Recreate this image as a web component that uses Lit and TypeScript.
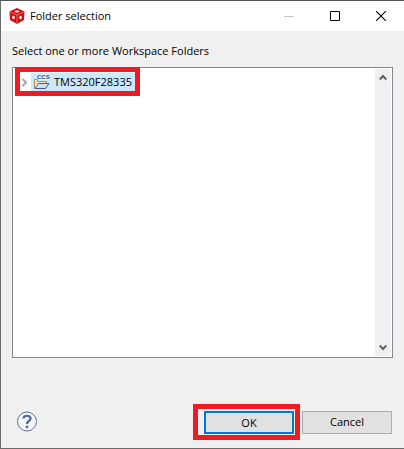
import { LitElement, html, css } from "lit";
import { customElement, state } from "lit/decorators.js";

@customElement("tree-row")
class TreeRow extends LitElement {
  static properties = { label: {} };
  declare label: string;

  static styles = css`
    :host {
      display: block;
    }
    .row {
      display: flex;
      align-items: center;
      height: 19px;
    }
    .twisty {
      display: flex;
      padding: 0;
      border: 0;
      width: 11px;
      background: none;
    }
    .item {
      display: flex;
      align-items: center;
      gap: 4px;
      flex: 1;
      height: 18px;
      padding: 0 3px 0 2px;
      border: 0;
      background: #cce8ff;
      color: #000;
      font: 11px/18px "Open Sans", "Noto Sans", sans-serif;
    }
    svg {
      display: block;
    }
    .badge {
      font: bold 6px "Liberation Sans", sans-serif;
      fill: #1f4f86;
    }
  `;

  render() {
    return html`
      <div class="row" role="treeitem" aria-selected="true">
        <button class="twisty" aria-label="Expand">
          <svg width="9" height="12" viewBox="0 0 9 12">
            <path d="M2.5 3L6 6.5L2.5 10" fill="none" stroke="#a6a6a6" stroke-width="2" />
          </svg>
        </button>
        <button class="item">
          <svg width="17" height="16" viewBox="0 0 17 16">
            <path d="M1.5 14.5V5.500H4.500V7.500H13.500V10" fill="#fdf0c8" stroke="#b98a3e" />
            <path d="M2 14.500L5.500 9.500H16L12.500 14.500Z" fill="#cfe2f7" stroke="#3b5fa6" />
            <rect x="5" y="0" width="12" height="6" fill="#e4f2ff" />
            <text class="badge" x="4" y="5">CCS</text>
          </svg>
          ${this.label}
        </button>
      </div>
    `;
  }
}

@customElement("app-root")
class AppRoot extends LitElement {
  @state() folders = ["TMS320F28335"];

  static styles = css`
    :host {
      display: block;
      font: 11px/16px "Open Sans", "Noto Sans", sans-serif;
      color: #000;
    }
    * {
      box-sizing: border-box;
    }
    svg {
      display: block;
    }
    button {
      font: inherit;
      color: inherit;
    }
    .dialog {
      display: flex;
      flex-direction: column;
      min-height: 100vh;
      border: 1px solid #6b6b6b;
      border-right: 0;
      border-top-color: #555;
      background: #f0f0f0;
    }
    .titlebar {
      display: flex;
      align-items: center;
      height: 30px;
      padding-left: 8px;
      background: #fff;
    }
    .title {
      flex: 1;
      margin: 0;
      padding-left: 5px;
      font: inherit;
    }
    .window-button {
      display: grid;
      place-items: center;
      width: 46px;
      height: 30px;
      padding: 0;
      border: 0;
      background: none;
    }
    .content {
      flex: 1;
      display: flex;
      flex-direction: column;
      padding: 12px 11px 8px;
    }
    .prompt {
      margin: 0 0 8px;
    }
    .tree {
      flex: 1;
      display: flex;
      border: 1px solid #828790;
      background: #fff;
    }
    .items {
      flex: 1;
      padding-left: 2px;
    }
    .mark {
      width: max-content;
      border: 5px solid #ed1c24;
    }
    .tree .mark {
      margin-top: -1px;
    }
    .scrollbar {
      display: flex;
      flex-direction: column;
      justify-content: space-between;
      width: 16px;
      margin: 1px;
      background: #f0f0f0;
    }
    .scroll-button {
      display: grid;
      place-items: center;
      width: 16px;
      height: 17px;
      padding: 0;
      border: 0;
      background: none;
    }
    .footer {
      display: flex;
      align-items: center;
      margin-top: 46px;
      padding: 0 1px 0 4px;
    }
    .help {
      margin-right: auto;
      padding: 0;
      border: 0;
      background: none;
    }
    .footer .mark {
      padding: 2px 1px 1px 6px;
      margin-right: 2px;
    }
    .action {
      display: block;
      width: 90px;
      height: 23px;
      padding: 0;
      border: 1px solid #adadad;
      background: #e1e1e1;
    }
    .primary {
      border: 2px solid #0078d7;
    }
  `;

  render() {
    return html`
      <main class="dialog" role="dialog" aria-labelledby="title">
        <header class="titlebar">
          <svg width="16" height="16" viewBox="0 0 16 16">
            <path d="M8 0L15.500 3.500L15 12L8 16L1 12L.5 3.500Z" fill="#d40f0f" />
            <path d="M1 4L8 7L15 4M8 7V15.500" fill="none" stroke="#f3a0a0" stroke-width=".6" />
            <ellipse cx="8" cy="3.500" rx="2.400" ry="1.100" fill="#fff" />
            <ellipse cx="4.500" cy="9.500" rx="1.300" ry="1.700" fill="#fff" />
            <ellipse cx="11.500" cy="9.500" rx="1.300" ry="1.700" fill="#fff" />
          </svg>
          <h1 class="title" id="title">Folder selection</h1>
          <button class="window-button" aria-label="Minimize">
            <svg width="10" height="10"><path d="M0 5.500H10" stroke="#c4c4c4" /></svg>
          </button>
          <button class="window-button" aria-label="Maximize">
            <svg width="10" height="10"><path d="M.5.5H9.500V9.500H.5Z" fill="none" stroke="#000" /></svg>
          </button>
          <button class="window-button" aria-label="Close">
            <svg width="10" height="10"><path d="M0 0L10 10M10 0L0 10" stroke="#000" stroke-width="1.100" /></svg>
          </button>
        </header>
        <section class="content">
          <p class="prompt" id="prompt">Select one or more Workspace Folders</p>
          <div class="tree">
            <div class="items" role="tree" aria-labelledby="prompt">
              ${this.folders.map((f) => html`<div class="mark"><tree-row .label=${f}></tree-row></div>`)}
            </div>
            <div class="scrollbar">
              <button class="scroll-button" aria-label="Scroll up">
                <svg width="8" height="7"><path d="M.7 5.500L4 2L7.300 5.500" fill="none" stroke="#606060" stroke-width="2" /></svg>
              </button>
              <button class="scroll-button" aria-label="Scroll down">
                <svg width="8" height="7"><path d="M.7 1.500L4 5L7.300 1.500" fill="none" stroke="#606060" stroke-width="2" /></svg>
              </button>
            </div>
          </div>
          <footer class="footer">
            <button class="help" aria-label="Help">
              <svg width="22" height="22" viewBox="0 0 22 22">
                <circle cx="11" cy="10.500" r="9.500" fill="#f6f6f6" stroke="#5d7299" />
                <path d="M7.500 7.500C7.500 4 14.500 4 14.500 7.500C14.500 10 11 10 11 13" fill="none" stroke="#556a94" stroke-width="2.400" />
                <circle cx="11" cy="16" r="1.400" fill="#556a94" />
              </svg>
            </button>
            <div class="mark"><button class="action primary">OK</button></div>
            <button class="action">Cancel</button>
          </footer>
        </section>
      </main>
    `;
  }
}
